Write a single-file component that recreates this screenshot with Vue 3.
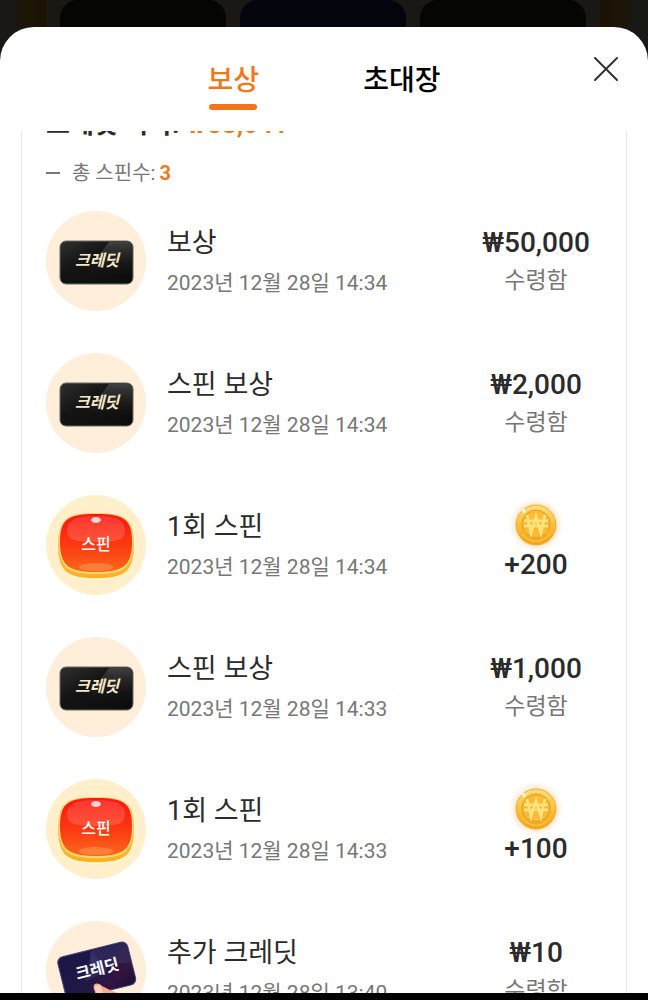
<template>
  <div class="page">
    <div class="backdrop" aria-hidden="true">
      <span class="glow"></span>
      <span class="tile"></span>
      <span class="tile blue"></span>
      <span class="tile"></span>
      <span class="glow"></span>
    </div>

    <section class="sheet">
      <header class="header">
        <nav class="tabs">
          <button
            v-for="tab in tabs"
            :key="tab"
            type="button"
            class="tab"
            :class="{ active: tab === activeTab }"
            @click="activeTab = tab"
          >
            {{ tab }}
          </button>
        </nav>
        <button type="button" class="close" aria-label="닫기">
          <svg viewBox="0 0 24 24" width="24" height="24">
            <path d="M1 1L23 23M23 1L1 23" fill="none" stroke="#333" stroke-width="2" stroke-linecap="round" />
          </svg>
        </button>
      </header>

      <div ref="scroller" class="scroller">
        <div class="card">
          <p class="total">크레딧 획득: <span class="accent">₩53,041</span></p>
          <p class="spins"><i class="dash"></i>총 스핀수: <b class="accent">3</b></p>

          <ul class="list">
            <li v-for="(item, index) in items" :key="index" class="item">
              <svg v-if="item.icon === 'credit'" class="icon" viewBox="0 0 100 100">
                <defs>
                  <linearGradient :id="'card' + index" x1="0" y1="0" x2="1" y2="1">
                    <stop offset="0" stop-color="#303030" />
                    <stop offset="0.4" stop-color="#141414" />
                    <stop offset="1" stop-color="#0c0c0c" />
                  </linearGradient>
                  <linearGradient :id="'shine' + index" x1="0" y1="0" x2="0" y2="1">
                    <stop offset="0" stop-color="#4c4c4c" />
                    <stop offset="1" stop-color="#141414" stop-opacity="0" />
                  </linearGradient>
                </defs>
                <circle cx="50" cy="50" r="50" fill="#ffeed9" />
                <rect x="14" y="30" width="73" height="43" rx="6" :fill="`url(#card${index})`" stroke="#6b6a64" stroke-width="1" />
                <path d="M63 31H81Q86 31 86 36V66L36 66Z" :fill="`url(#shine${index})`" opacity="0.8" />
                <text x="51" y="55" class="card-text" fill="#f4e8c6">크레딧</text>
              </svg>

              <svg v-else-if="item.icon === 'spin'" class="icon" viewBox="0 0 100 100">
                <defs>
                  <linearGradient :id="'red' + index" x1="0" y1="0" x2="0" y2="1">
                    <stop offset="0" stop-color="#fb1712" />
                    <stop offset="0.55" stop-color="#fb3a12" />
                    <stop offset="1" stop-color="#fb6a1c" />
                  </linearGradient>
                  <linearGradient :id="'gloss' + index" x1="0" y1="0" x2="0" y2="1">
                    <stop offset="0" stop-color="#ff5050" stop-opacity="0.5" />
                    <stop offset="1" stop-color="#ff6a50" stop-opacity="0.6" />
                  </linearGradient>
                  <linearGradient :id="'base' + index" x1="0" y1="0" x2="0" y2="1">
                    <stop offset="0" stop-color="#ffd68a" />
                    <stop offset="1" stop-color="#f9b11c" />
                  </linearGradient>
                </defs>
                <circle cx="50" cy="50" r="50" fill="#fff0cb" />
                <path d="M50 18C80 18 88 24 88 50C88 77 78 83 50 83C22 83 12 77 12 50C12 24 20 18 50 18Z" :fill="`url(#base${index})`" />
                <path d="M50 18C79 18 87 24 87 47C87 74 77 79 50 79C23 79 13 74 13 47C13 24 21 18 50 18Z" fill="#ffd873" />
                <path d="M50 19C78 19 86 24 86 47C86 72 76 77 50 77C24 77 14 72 14 47C14 24 22 19 50 19Z" :fill="`url(#red${index})`" />
                <path d="M50 21C72 21 79 26 79 36C79 45 70 47 50 47C30 47 21 45 21 36C21 26 28 21 50 21Z" :fill="`url(#gloss${index})`" />
                <ellipse cx="50" cy="72" rx="17" ry="4" fill="#ff9a55" opacity="0.5" />
                <ellipse cx="50" cy="25" rx="5" ry="3" fill="#ffd3cd" />
                <text x="50" y="55" class="spin-text" fill="#fff">스핀</text>
              </svg>

              <svg v-else class="icon" viewBox="0 0 100 100">
                <defs>
                  <linearGradient id="navy" x1="0" y1="0" x2="1" y2="1">
                    <stop offset="0" stop-color="#1b1646" />
                    <stop offset="0.5" stop-color="#1d1848" />
                    <stop offset="0.75" stop-color="#341442" />
                    <stop offset="1" stop-color="#151038" />
                  </linearGradient>
                </defs>
                <circle cx="50" cy="50" r="50" fill="#ffeed9" />
                <g transform="rotate(-14 50 51)">
                  <rect x="15" y="28" width="72" height="44" rx="6" fill="url(#navy)" stroke="#4b4670" stroke-width="1" />
                  <path d="M50 29H81Q86 29 86 34V50L46 45Z" fill="#4a4478" opacity="0.35" />
                  <path d="M50 29L38 58L62 52Z" fill="#5a5488" opacity="0.25" />
                  <text x="52" y="54" class="card-text upright" fill="#fff">크레딧</text>
                </g>
                <path d="M48 68C46 62 52 61 56 65L66 70C76 72 78 80 78 94L56 98L52 80Z" fill="#f6ab8c" />
                <path d="M49 68C48 64 53 63 55 66L57 72L51 73Z" fill="#ffd2c0" />
              </svg>

              <div class="info">
                <h3 class="name">{{ item.name }}</h3>
                <time class="date">{{ item.date }}</time>
              </div>

              <div class="result">
                <svg v-if="item.coin" class="coin" viewBox="8 8 40 40">
                  <defs>
                    <radialGradient :id="'halo' + index">
                      <stop offset="0.65" stop-color="#ffbf70" stop-opacity="0.5" />
                      <stop offset="1" stop-color="#ffe3cc" stop-opacity="0" />
                    </radialGradient>
                    <linearGradient :id="'gold' + index" x1="0" y1="0" x2="0" y2="1">
                      <stop offset="0" stop-color="#ffe07a" />
                      <stop offset="0.5" stop-color="#fdbf35" />
                      <stop offset="1" stop-color="#f5a214" />
                    </linearGradient>
                  </defs>
                  <circle cx="28" cy="28" r="28" :fill="`url(#halo${index})`" />
                  <circle cx="28" cy="28" r="20" :fill="`url(#gold${index})`" stroke="#f3ae38" stroke-width="1" />
                  <circle cx="28" cy="27" r="14" fill="#fdbb35" stroke="#dc9a30" stroke-width="1" />
                  <path d="M14 37A17 17 0 0 0 42 37" fill="none" stroke="#ffd45c" stroke-width="1" />
                  <path d="M19 19L23 37L28 21L33 37L37 19M16 25H40M16 30H40" fill="none" stroke="#e0951c" stroke-width="3" opacity="0.5" />
                  <path d="M19 18L23 36L28 20L33 36L37 18M16 24H40M16 29H40" fill="none" stroke="#ffe27a" stroke-width="3" />
                  <circle cx="16" cy="14" r="2" fill="#fff" opacity="0.8" />
                </svg>
                <strong class="amount">{{ item.amount }}</strong>
                <span v-if="!item.coin" class="status">수령함</span>
              </div>
            </li>
          </ul>
        </div>
      </div>
    </section>
  </div>
</template>

<script setup>
import { ref, onMounted } from 'vue';

const tabs = ['보상', '초대장'];
const activeTab = ref('보상');
const scroller = ref(null);

const items = ref([
  { icon: 'credit', name: '보상', date: '2023년 12월 28일 14:34', amount: '₩50,000' },
  { icon: 'credit', name: '스핀 보상', date: '2023년 12월 28일 14:34', amount: '₩2,000' },
  { icon: 'spin', name: '1회 스핀', date: '2023년 12월 28일 14:34', amount: '+200', coin: true },
  { icon: 'credit', name: '스핀 보상', date: '2023년 12월 28일 14:33', amount: '₩1,000' },
  { icon: 'spin', name: '1회 스핀', date: '2023년 12월 28일 14:33', amount: '+100', coin: true },
  { icon: 'extra', name: '추가 크레딧', date: '2023년 12월 28일 13:40', amount: '₩10' },
]);

// open the list just past the total line
onMounted(() => {
  scroller.value.scrollTop = 50;
});
</script>

<style>
body {
  margin: 0;
  background: #000;
}
</style>

<style scoped>
.page {
  display: flex;
  flex-direction: column;
  height: 100vh;
  box-sizing: border-box;
  padding-bottom: 7px;
  background: #000;
  font-family: Roboto, "Noto Sans CJK KR", sans-serif;
  color: #2b2b2b;
}

.backdrop {
  display: flex;
  gap: 14px;
  height: 27px;
  background: #1a1814;
}

.glow {
  flex: 0 0 46px;
  background: linear-gradient(90deg, #1a1814 30%, #1d1505 50%, #1a1304);
}

.glow:last-child {
  flex-basis: 48px;
  background: linear-gradient(270deg, #1a1814 30%, #1d1505 50%, #1a1304);
}

.tile {
  flex: 1;
  border-radius: 18px 18px 0 0;
  background: #050504;
}

.tile.blue {
  background: #04040d;
}

.sheet {
  flex: 1;
  min-height: 0;
  display: flex;
  flex-direction: column;
  border-radius: 34px 34px 0 0;
  background: #fff;
  box-shadow: 0 -30px 0 30px #1a1814;
  clip-path: inset(0 0 0 0);
}

.header {
  display: flex;
  justify-content: center;
  position: relative;
  height: 104px;
  flex: none;
}

.tabs {
  display: flex;
  gap: 104px;
  padding-top: 31px;
}

.tab {
  display: flex;
  flex-direction: column;
  align-items: center;
  height: 52px;
  padding: 0;
  border: 0;
  background: none;
  font: 500 28px/40px "Noto Sans CJK KR", sans-serif;
  color: #000;
  cursor: pointer;
}

.tab.active {
  color: #f07818;
}

.tab.active::after {
  content: "";
  width: 48px;
  height: 6px;
  margin-top: 6px;
  border-radius: 3px;
  background: #f5731a;
}

.close {
  position: absolute;
  top: 30px;
  right: 30px;
  display: flex;
  padding: 0;
  border: 0;
  background: none;
  cursor: pointer;
}

.scroller {
  flex: 1;
  min-height: 0;
  padding: 0 21px;
  overflow-y: auto;
  scrollbar-width: none;
}

.card {
  padding: 20px 24px 24px;
  border: 1px solid #e9e9e9;
  border-radius: 16px;
}

.total,
.spins {
  margin: 0;
}

.total {
  font-size: 26px;
  line-height: 44px;
  font-weight: 700;
}

.accent {
  color: #ec7a1c;
}

.spins {
  display: flex;
  align-items: center;
  gap: 4px;
  padding-top: 12px;
  font-size: 20px;
  line-height: 30px;
  color: #777;
}

.dash {
  width: 14px;
  height: 2px;
  margin-right: 8px;
  background: #777;
}

.list {
  display: flex;
  flex-direction: column;
  gap: 42px;
  margin: 0;
  padding: 23px 0 0;
  list-style: none;
}

.item {
  display: flex;
  align-items: center;
  height: 100px;
}

.icon {
  flex: none;
  width: 100px;
  height: 100px;
}

.card-text,
.spin-text {
  font-family: "Noto Sans CJK KR", sans-serif;
  font-size: 16px;
  text-anchor: middle;
}

.card-text {
  font-weight: 700;
  font-style: italic;
}

.card-text.upright {
  font-style: normal;
}

.spin-text {
  font-weight: 500;
}

.info {
  flex: 1;
  display: flex;
  flex-direction: column;
  gap: 4px;
  margin-left: 21px;
}

.name {
  margin: 0;
  font-size: 27px;
  line-height: 40px;
  font-weight: 400;
}

.date {
  font-size: 21px;
  line-height: 32px;
  color: #777;
}

.result {
  display: flex;
  flex-direction: column;
  align-items: center;
  width: 132px;
}

.coin {
  width: 40px;
  height: 40px;
  overflow: visible;
}

.amount {
  font-size: 28px;
  line-height: 40px;
  font-weight: 500;
}

.status {
  font-size: 23px;
  line-height: 36px;
  color: #777;
}
</style>
